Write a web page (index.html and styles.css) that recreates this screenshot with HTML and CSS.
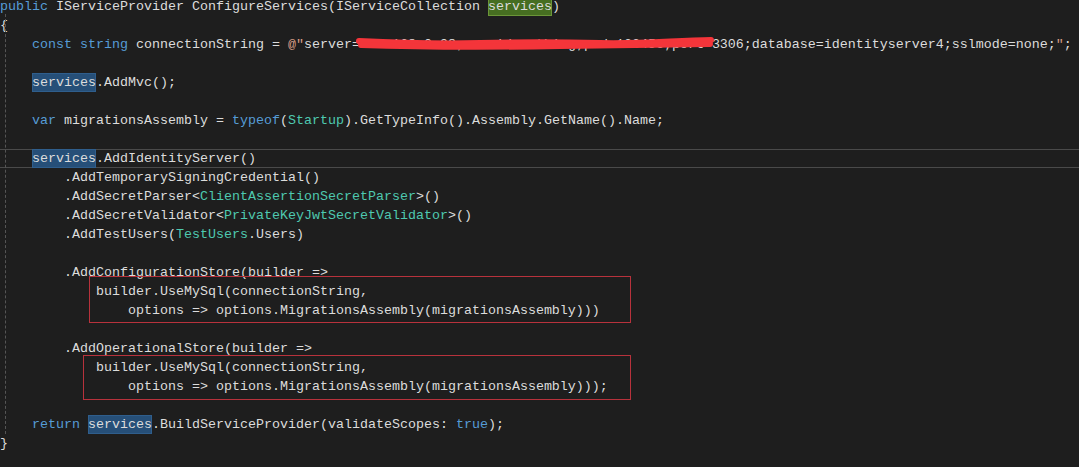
FILE: index.html
```html
<!DOCTYPE html>
<html>

<head>
	<title>Startup.cs</title>
	<link rel="stylesheet" href="styles.css">
</head>

<body>
	<div class="editor">
		<div class="guide"></div>
		<div class="mark mark-config"></div>
		<div class="mark mark-op"></div>
		<svg class="scribble" width="1079" height="80" viewBox="0 0 1079 80">
			<path d="M359 44 C 400 46, 440 47, 480 46 S 560 45, 600 46 S 670 44, 711 43" />
			<path d="M361 48 C 420 50, 500 50, 560 49 S 650 48, 710 47" />
		</svg>

		<div class="code">
			<div class="line"><span class="kw">public</span> IServiceProvider ConfigureServices(IServiceCollection <span class="def">services</span>)</div>
			<div class="line">{</div>
			<div class="line">    <span class="kw">const</span> <span class="kw">string</span> connectionString = <span class="str">@"</span>server=192.168.0.98;userid=nothing;pwd=123456;port=3306;database=identityserver4;sslmode=none;<span class="str">"</span>;</div>
			<div class="line"></div>
			<div class="line">    <span class="ref">services</span>.AddMvc();</div>
			<div class="line"></div>
			<div class="line">    <span class="kw">var</span> migrationsAssembly = <span class="kw">typeof</span>(<span class="type">Startup</span>).GetTypeInfo().Assembly.GetName().Name;</div>
			<div class="line"></div>
			<div class="line current">    <span class="ref">services</span>.AddIdentityServer()</div>
			<div class="line">        .AddTemporarySigningCredential()</div>
			<div class="line">        .AddSecretParser&lt;<span class="type">ClientAssertionSecretParser</span>&gt;()</div>
			<div class="line">        .AddSecretValidator&lt;<span class="type">PrivateKeyJwtSecretValidator</span>&gt;()</div>
			<div class="line">        .AddTestUsers(<span class="type">TestUsers</span>.Users)</div>
			<div class="line"></div>
			<div class="line">        .AddConfigurationStore(builder =&gt;</div>
			<div class="line">            builder.UseMySql(connectionString,</div>
			<div class="line">                options =&gt; options.MigrationsAssembly(migrationsAssembly)))</div>
			<div class="line"></div>
			<div class="line">        .AddOperationalStore(builder =&gt;</div>
			<div class="line">            builder.UseMySql(connectionString,</div>
			<div class="line">                options =&gt; options.MigrationsAssembly(migrationsAssembly)));</div>
			<div class="line"></div>
			<div class="line">    <span class="kw">return</span> <span class="ref">services</span>.BuildServiceProvider(validateScopes: <span class="kw">true</span>);</div>
			<div class="line">}</div>
		</div>
	</div>
</body>

</html>
```

FILE: styles.css
```css
body {
	margin: 0;
	background-color: #1e1e1e;
	overflow: hidden;
}

.editor {
	position: relative;
	height: 467px;
}

.code {
	margin-top: -3px;
	font-family: "Liberation Mono", monospace;
	font-size: 13.33px;
	color: #dcdcdc;
}

.line {
	height: 19px;
	line-height: 19px;
	white-space: pre;
}

.line.current {
	box-shadow: inset 0 1px #4a4a4a, inset 0 -1px #4a4a4a;
}

.kw {
	color: #569cd6;
}

.type {
	color: #4ec9b0;
}

.str {
	color: #d69d85;
}

.ref {
	display: inline-block;
	background-color: #264f78;
	box-shadow: inset 0 0 0 1px #2f5e8c;
}

.def {
	display: inline-block;
	background-color: #466e21;
	box-shadow: inset 0 0 0 1px #6b9538;
}

.guide {
	position: absolute;
	left: 5px;
	top: 17px;
	height: 420px;
	border-left: 1px dashed #555555;
}

.mark {
	position: absolute;
	border: 1px solid #b8323c;
}

.mark-config {
	left: 89px;
	top: 279px;
	width: 540px;
	height: 45px;
}

.mark-op {
	left: 83px;
	top: 358px;
	width: 546px;
	height: 43px;
}

.scribble {
	position: absolute;
	left: 0;
	top: 0;
	z-index: 2;
}

.scribble path {
	fill: none;
	stroke: #f4353a;
	stroke-width: 6;
	stroke-linecap: round;
}
```
